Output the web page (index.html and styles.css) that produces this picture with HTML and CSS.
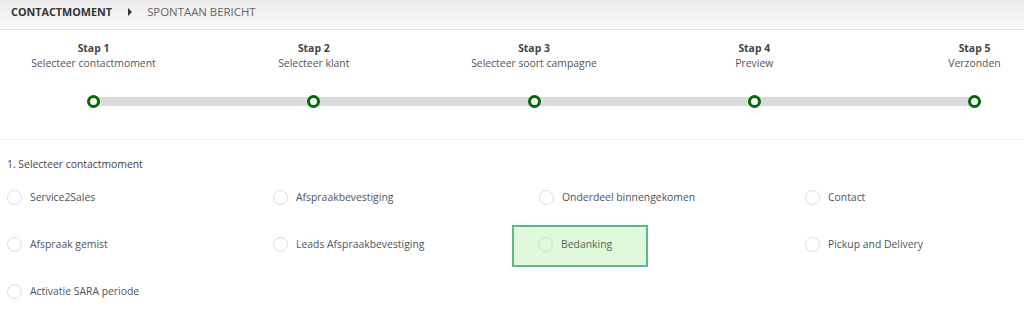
FILE: index.html
```html
<!DOCTYPE html>
<html lang="nl">
<head>
    <meta charset="UTF-8">
    <meta name="viewport" content="width=device-width, initial-scale=1.0">
    <title>Contactmoment - Spontaan bericht</title>
    <link rel="stylesheet" href="styles.css">
</head>
<body>
    <header class="crumbs">
        <span class="crumb-main">CONTACTMOMENT</span>
        <svg class="crumb-caret" width="6" height="8" viewBox="0 0 6 8"><path d="M1 0 L5 4 L1 8 Z" fill="#333"/></svg>
        <span class="crumb-sub">SPONTAAN BERICHT</span>
    </header>

    <section class="wizard">
        <div class="steps">
            <div class="step">
                <div class="step-title">Stap 1</div>
                <div class="step-desc">Selecteer contactmoment</div>
                <span class="step-dot"></span>
            </div>
            <div class="step">
                <div class="step-title">Stap 2</div>
                <div class="step-desc">Selecteer klant</div>
                <span class="step-dot"></span>
            </div>
            <div class="step">
                <div class="step-title">Stap 3</div>
                <div class="step-desc">Selecteer soort campagne</div>
                <span class="step-dot"></span>
            </div>
            <div class="step">
                <div class="step-title">Stap 4</div>
                <div class="step-desc">Preview</div>
                <span class="step-dot"></span>
            </div>
            <div class="step">
                <div class="step-title">Stap 5</div>
                <div class="step-desc">Verzonden</div>
                <span class="step-dot"></span>
            </div>
        </div>
    </section>

    <section class="choose">
        <div class="choose-label">1. Selecteer contactmoment</div>
        <div class="options">
            <label class="option"><span class="radio"></span>Service2Sales</label>
            <label class="option"><span class="radio"></span>Afspraakbevestiging</label>
            <label class="option"><span class="radio"></span>Onderdeel binnengekomen</label>
            <label class="option"><span class="radio"></span>Contact</label>
            <label class="option"><span class="radio"></span>Afspraak gemist</label>
            <label class="option"><span class="radio"></span>Leads Afspraakbevestiging</label>
            <label class="option highlight"><span class="radio"></span>Bedanking</label>
            <label class="option"><span class="radio"></span>Pickup and Delivery</label>
            <label class="option"><span class="radio"></span>Activatie SARA periode</label>
        </div>
    </section>
</body>
</html>
```

FILE: styles.css
```css
/* General */
body {
    font-family: "Open Sans", Arial, sans-serif;
    margin: 0;
    padding: 0;
    background-color: #fff;
    color: #555;
    overflow: hidden;
}

/* Breadcrumb bar */
.crumbs {
    height: 30px;
    box-sizing: border-box;
    padding: 4px 0 0 11px;
    display: flex;
    align-items: flex-start;
    background: linear-gradient(to bottom, #ebebeb, #fafafa);
    border-bottom: 1px solid #e2e2e2;
    line-height: 16px;
}

.crumb-main {
    font-size: 10.8px;
    font-weight: 700;
    color: #333;
}

.crumb-caret {
    margin: 4px 14px 0 15px;
}

.crumb-sub {
    font-size: 11.4px;
    color: #666;
}

/* Wizard steps */
.wizard {
    padding: 11px 0 31px;
    border-bottom: 1px solid #eee;
}

.steps {
    position: relative;
    display: flex;
    justify-content: space-between;
    margin: 0 43px 0 87px;
}

.steps::before {
    content: "";
    position: absolute;
    left: 6px;
    right: 6px;
    bottom: 2px;
    height: 9px;
    background-color: #d8dcdc;
}

.step {
    width: 13px;
    display: flex;
    flex-direction: column;
    align-items: center;
    font-size: 10.4px;
    line-height: 15px;
    white-space: nowrap;
}

.step-title {
    font-weight: 700;
    color: #444;
}

.step-desc {
    color: #555;
}

.step-dot {
    position: relative;
    margin-top: 24px;
    width: 13px;
    height: 13px;
    box-sizing: border-box;
    border: 3px solid #006b00;
    border-radius: 50%;
    background-color: #fff;
}

/* Options */
.choose {
    padding: 17px 0 0 7px;
}

.choose-label {
    font-size: 10.4px;
    line-height: 15px;
    color: #444;
    margin-bottom: 15px;
}

.options {
    display: grid;
    grid-template-columns: repeat(4, 266px);
    row-gap: 27px;
}

.option {
    display: flex;
    align-items: center;
    height: 20px;
    font-size: 10.4px;
    color: #4b5560;
}

.radio {
    width: 15px;
    height: 15px;
    box-sizing: border-box;
    border: 1px solid #dcdcdc;
    border-radius: 50%;
    margin-right: 8px;
    background-color: #fff;
}

.option.highlight {
    justify-self: start;
    margin: -9px 0 -13px -27px;
    padding: 7px 34px 11px 24px;
    border: 2px solid #5db98c;
    background-color: #dff9da;
    color: #55665e;
}

.option.highlight .radio {
    background-color: transparent;
    border-color: #c9e6c4;
}
```
